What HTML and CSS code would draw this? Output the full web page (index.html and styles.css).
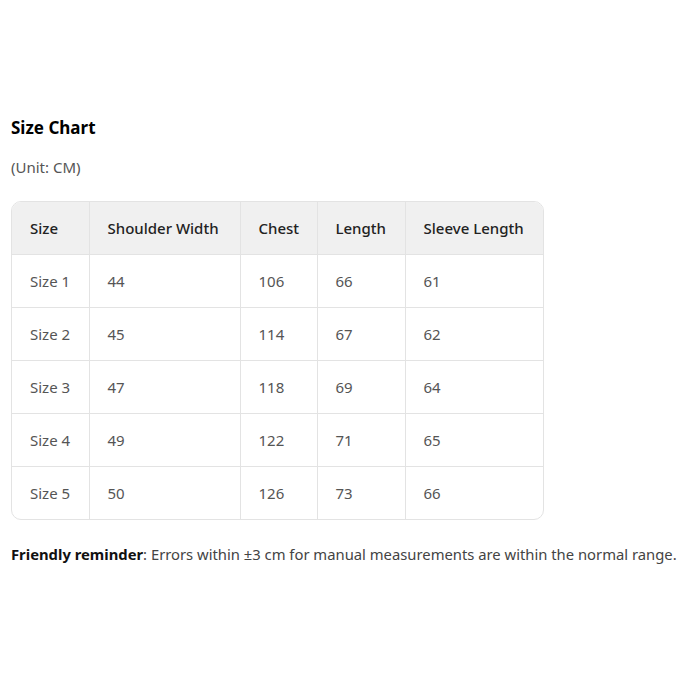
FILE: index.html
```html
<!DOCTYPE html>
<html>
<head>
<meta charset="utf-8">
<link rel="stylesheet" href="styles.css">
</head>
<body>
<div class="page">
  <h2 class="title">Size Chart</h2>
  <p class="unit">(Unit: CM)</p>
  <div class="table-wrap">
    <table class="chart">
      <colgroup>
        <col class="c1"><col class="c2"><col class="c3"><col class="c4"><col class="c5">
      </colgroup>
      <thead>
        <tr><th>Size</th><th>Shoulder Width</th><th>Chest</th><th>Length</th><th>Sleeve Length</th></tr>
      </thead>
      <tbody>
        <tr><td>Size 1</td><td>44</td><td>106</td><td>66</td><td>61</td></tr>
        <tr><td>Size 2</td><td>45</td><td>114</td><td>67</td><td>62</td></tr>
        <tr><td>Size 3</td><td>47</td><td>118</td><td>69</td><td>64</td></tr>
        <tr><td>Size 4</td><td>49</td><td>122</td><td>71</td><td>65</td></tr>
        <tr><td>Size 5</td><td>50</td><td>126</td><td>73</td><td>66</td></tr>
      </tbody>
    </table>
  </div>
  <p class="note"><strong>Friendly reminder</strong>: Errors within ±3 cm for manual measurements are within the normal range.</p>
</div>
</body>
</html>
```
FILE: styles.css
```css
html, body {
  margin: 0;
  padding: 0;
  background: #fff;
}
body {
  font-family: "Noto Sans", "Open Sans", sans-serif;
  color: #444;
}
.page {
  padding: 116px 0 0 11px;
}
.title {
  margin: 0;
  font-size: 17px;
  font-weight: 700;
  color: #000;
  line-height: 24px;
}
.unit {
  margin: 17px 0 0;
  font-size: 15px;
  line-height: 20px;
  color: #555;
}
.table-wrap {
  margin-top: 24px;
  width: 531px;
  border: 1px solid #e3e3e3;
  border-radius: 10px;
  overflow: hidden;
}
.chart {
  border-collapse: collapse;
  width: 100%;
  table-layout: fixed;
  font-size: 15px;
}
.c1 { width: 77px; }
.c2 { width: 151px; }
.c3 { width: 77px; }
.c4 { width: 88px; }
.chart th, .chart td {
  height: 52px;
  padding: 0 0 0 18px;
  text-align: left;
  border-right: 1px solid #e3e3e3;
  border-bottom: 1px solid #e3e3e3;
}
.chart th:last-child, .chart td:last-child { border-right: none; }
.chart tbody tr:last-child td { border-bottom: none; }
.chart th {
  background: #f0f0f0;
  font-weight: 500;
  color: #222;
}
.chart td {
  color: #555;
}
.note {
  margin: 24px 0 0;
  font-size: 14.8px;
  line-height: 20px;
  color: #444;
}
.note strong {
  color: #111;
  font-weight: 700;
}
```
